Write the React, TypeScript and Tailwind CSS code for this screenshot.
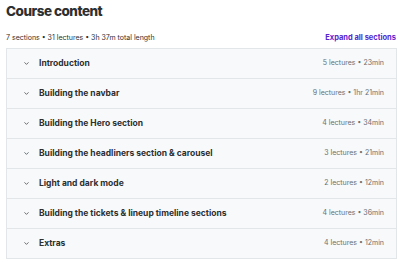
import React from "react";

const sections = [
  { title: "Introduction", meta: "5 lectures • 23min" },
  { title: "Building the navbar", meta: "9 lectures • 1hr 21min" },
  { title: "Building the Hero section", meta: "4 lectures • 34min" },
  { title: "Building the headliners section & carousel", meta: "3 lectures • 21min" },
  { title: "Light and dark mode", meta: "2 lectures • 12min" },
  { title: "Building the tickets & lineup timeline sections", meta: "4 lectures • 36min" },
  { title: "Extras", meta: "4 lectures • 12min" },
];

function Chevron() {
  return (
    <svg width="7" height="7" viewBox="0 0 24 24" fill="none" stroke="#555a5e" strokeWidth="3" strokeLinecap="round" strokeLinejoin="round">
      <path d="M6 9l6 6 6-6" />
    </svg>
  );
}

export default function App() {
  return (
    <div className="w-[400px] h-[262px] bg-white overflow-hidden pl-[6px] pr-[4px]" style={{ fontFamily: "Inter, 'Noto Sans', sans-serif" }}>
      <h2
        className="text-[13.5px] leading-[20px] font-extrabold text-[#2d2f31] pt-[1px] tracking-[-0.5px]"
        style={{ fontFamily: "Inter, Roboto, sans-serif" }}
      >
        Course content
      </h2>
      <div className="flex items-end justify-between mt-[11px] h-[12px]">
        <span className="text-[7px] text-[#2d2f31] leading-[12px]">7 sections • 31 lectures • 3h 37m total length</span>
        <span className="text-[7.5px] font-bold text-[#5624d0] leading-[12px]">Expand all sections</span>
      </div>
      <div className="mt-[4px] border border-[#e2e6e9] w-[391px]">
        {sections.map((s, i) => (
          <div
            key={i}
            className={`flex items-center bg-[#f7f9fa] pl-[16px] pr-[12px] ${i > 0 ? "border-t border-[#e2e6e9] h-[30px]" : "h-[29px]"}`}
          >
            <Chevron />
            <span className="ml-[9px] text-[8.5px] font-bold text-[#2d2f31] flex-1">{s.title}</span>
            <span className="text-[7px] text-[#6a6f73]">{s.meta}</span>
          </div>
        ))}
      </div>
    </div>
  );
}
